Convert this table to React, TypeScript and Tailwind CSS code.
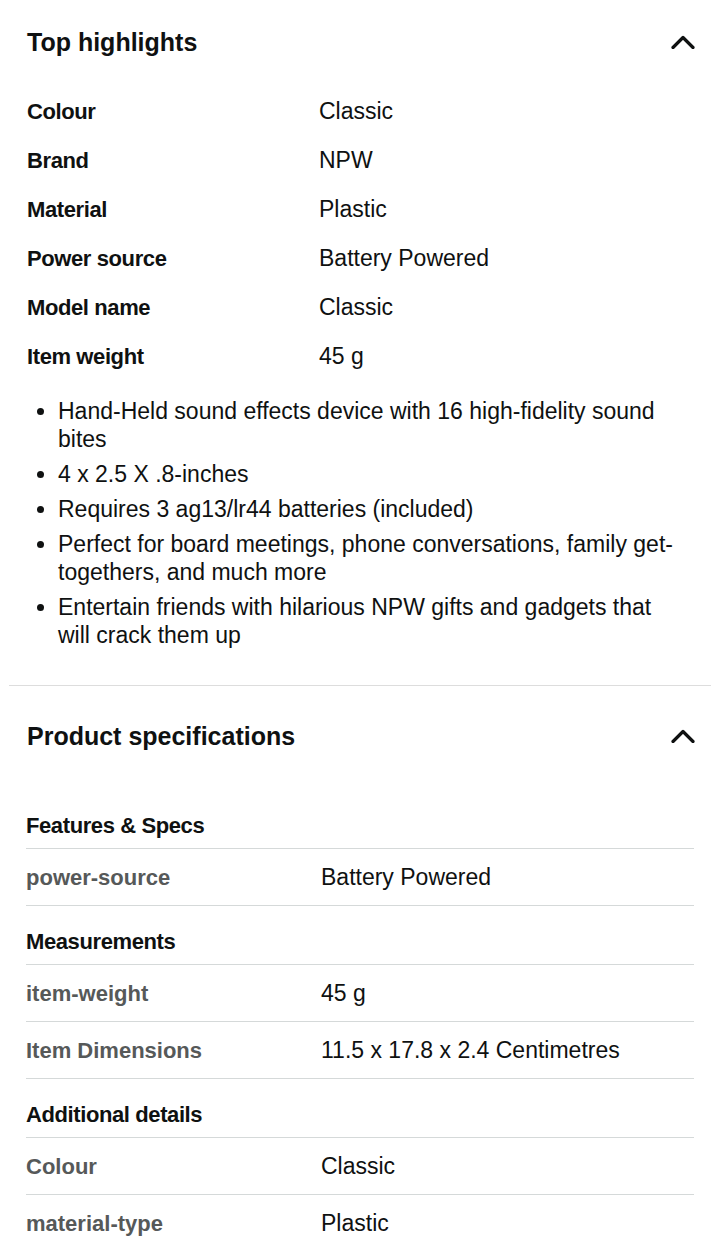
import React from 'react';

const highlights = [
  { label: 'Colour', value: 'Classic' },
  { label: 'Brand', value: 'NPW' },
  { label: 'Material', value: 'Plastic' },
  { label: 'Power source', value: 'Battery Powered' },
  { label: 'Model name', value: 'Classic' },
  { label: 'Item weight', value: '45 g' },
];

const bullets = [
  'Hand-Held sound effects device with 16 high-fidelity sound bites',
  '4 x 2.5 X .8-inches',
  'Requires 3 ag13/lr44 batteries (included)',
  'Perfect for board meetings, phone conversations, family get-togethers, and much more',
  'Entertain friends with hilarious NPW gifts and gadgets that will crack them up',
];

const specGroups = [
  { title: 'Features & Specs', rows: [{ label: 'power-source', value: 'Battery Powered' }] },
  {
    title: 'Measurements',
    rows: [
      { label: 'item-weight', value: '45 g' },
      { label: 'Item Dimensions', value: '11.5 x 17.8 x 2.4 Centimetres' },
    ],
  },
  {
    title: 'Additional details',
    rows: [
      { label: 'Colour', value: 'Classic' },
      { label: 'material-type', value: 'Plastic' },
    ],
  },
];

const ChevronUp = () => (
  <svg width="24" height="14" viewBox="0 0 24 14" fill="none">
    <polyline points="2,12.5 12,2.5 22,12.5" stroke="#0f1111" strokeWidth="3.2" strokeLinecap="round" strokeLinejoin="round" />
  </svg>
);

const SectionHeader = ({ title, height }: { title: string; height: string }) => (
  <div className={`flex items-center justify-between px-[27px] pr-[25px] ${height}`}>
    <h2 className="text-[25px] font-bold leading-none">{title}</h2>
    <ChevronUp />
  </div>
);

export default function App() {
  return (
    <div
      className="w-[720px] min-h-[1246px] bg-white text-[#0f1111]"
      style={{ fontFamily: '"Liberation Sans", Arial, sans-serif' }}
    >
      {/* Top highlights */}
      <section>
        <SectionHeader title="Top highlights" height="h-[84px]" />
        <div className="mt-[3px] px-[27px]">
          {highlights.map((h) => (
            <div key={h.label} className="flex h-[49px] items-center">
              <div className="w-[292px] text-[22px] font-bold tracking-[-0.4px]">{h.label}</div>
              <div className="text-[23px]">{h.value}</div>
            </div>
          ))}
        </div>
        <ul className="mt-[16px] flex flex-col gap-[7px] pl-[58px] pr-[40px]">
          {bullets.map((b) => (
            <li key={b} className="relative text-[23px] leading-[28px]">
              <span className="absolute left-[-21px] top-[11px] h-[7px] w-[7px] rounded-full bg-[#0f1111]" />
              {b}
            </li>
          ))}
        </ul>
        <div className="mx-[9px] mt-[36px] border-t border-[#dddddd]" />
      </section>

      {/* Product specifications */}
      <section>
        <SectionHeader title="Product specifications" height="h-[100px]" />
        <div className="mx-[26px] mt-[4px]">
          {specGroups.map((g) => (
            <div key={g.title}>
              <div className="border-b border-[#d5d9d9] pt-[22px] pb-[8px] text-[22px] font-bold leading-[28px] tracking-[-0.4px]">
                {g.title}
              </div>
              {g.rows.map((r) => (
                <div key={r.label} className="flex h-[57px] items-center border-b border-[#d5d9d9]">
                  <div className="w-[295px] text-[22px] font-bold text-[#565959]">{r.label}</div>
                  <div className="text-[23px]">{r.value}</div>
                </div>
              ))}
            </div>
          ))}
        </div>
      </section>
    </div>
  );
}
